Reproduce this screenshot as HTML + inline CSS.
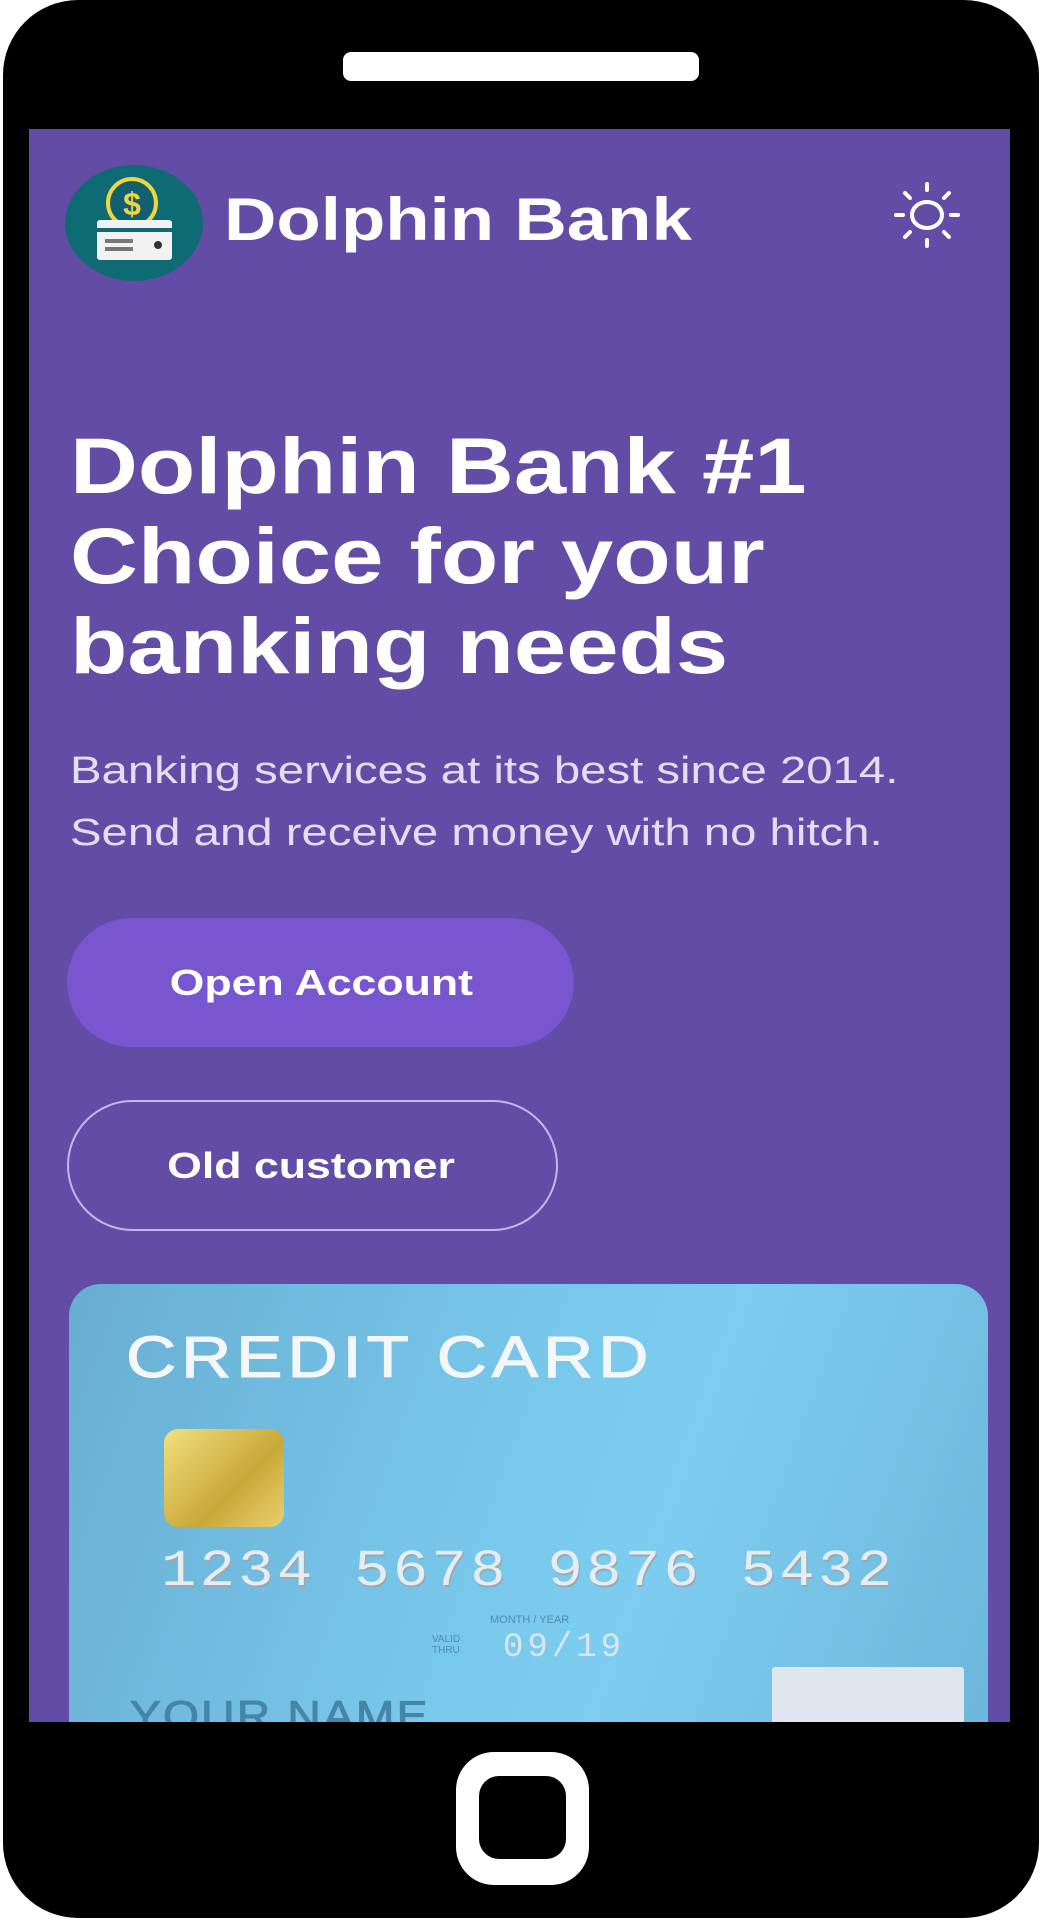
<!DOCTYPE html>
<html><head><meta charset="utf-8"><style>
*{margin:0;padding:0;box-sizing:border-box}
html,body{width:1042px;height:1920px;background:#fff;overflow:hidden;font-family:"Liberation Sans",Arial,sans-serif}
.phone{position:absolute;left:3px;top:0;width:1036px;height:1918px;background:#000;border-radius:75px}
.spk{position:absolute;left:343px;top:52px;width:356px;height:29px;background:#fff;border-radius:8px}
.screen{position:absolute;left:29px;top:129px;width:981px;height:1593px;background:#624ca6;overflow:hidden}
.home{position:absolute;left:456px;top:1752px;width:133px;height:133px;background:#fff;border-radius:38px}
.home:after{content:"";position:absolute;left:23px;top:24px;width:87px;height:83px;background:#000;border-radius:20px}
.abs{position:absolute}
.brand{left:195px;top:56px;font-size:60px;font-weight:bold;color:#fff;white-space:nowrap;transform:scaleX(1.21);transform-origin:left}
h1{position:absolute;left:41px;top:292px;font-size:79px;line-height:90px;color:#fff;font-weight:bold;white-space:nowrap;transform:scaleX(1.19);transform-origin:left}
.p{left:41px;top:611px;font-size:38px;line-height:62px;color:#e4dcf3;white-space:nowrap;transform:scaleX(1.245);transform-origin:left}
.b1{left:38px;top:789px;width:507px;height:129px;border-radius:65px;background:#7856d0;color:#fff;font-weight:bold;font-size:36px;display:flex;align-items:center;justify-content:center;padding-left:2px}
.b2{left:38px;top:971px;width:491px;height:131px;border-radius:66px;border:2px solid #c6b6ee;color:#fff;font-weight:bold;font-size:36px;display:flex;align-items:center;justify-content:center;padding-right:2px}
.b1 span,.b2 span{display:inline-block;transform:scaleX(1.24)}
.card{left:40px;top:1155px;width:919px;height:600px;border-radius:32px;background:linear-gradient(110deg,#68aed2 0%,#78c8ec 45%,#7dcdf0 60%,#6ab4d8 100%)}
</style></head><body>
<div class="phone"></div>
<div class="spk"></div>
<div class="screen">
  <svg class="abs" style="left:36px;top:36px" width="140" height="118" viewBox="0 0 140 118">
    <ellipse cx="69" cy="58" rx="69" ry="58" fill="#0f6b73"/>
    <circle cx="67" cy="38" r="24" fill="#116070" stroke="#f0d540" stroke-width="4"/>
    <text x="67" y="50" text-anchor="middle" font-size="32" font-weight="bold" fill="#f0d540" font-family="Liberation Sans">$</text>
    <rect x="32" y="55" width="75" height="40" rx="3" fill="#f2f2f2"/>
    <rect x="32" y="63" width="75" height="4" fill="#0f6b73"/>
    <rect x="40" y="74" width="28" height="4" fill="#777"/>
    <rect x="40" y="82" width="28" height="4" fill="#777"/>
    <circle cx="93" cy="80" r="4" fill="#333"/>
  </svg>
  <div class="abs brand">Dolphin Bank</div>
  <svg class="abs" style="left:863px;top:50px" width="70" height="70" viewBox="0 0 70 70" stroke="#fff" stroke-width="4" stroke-linecap="round" fill="none">
    <ellipse cx="35" cy="36" rx="15" ry="13"/>
    <path d="M35 5v6M35 61v6M4 36h7M59 36h7M13 14l5 5M57 14l-5 5M13 58l5-5M57 58l-5-5"/>
  </svg>
  <h1>Dolphin Bank #1<br>Choice for your<br>banking needs</h1>
  <div class="abs p">Banking services at its best since 2014.<br>Send and receive money with no hitch.</div>
  <div class="abs b1"><span>Open Account</span></div>
  <div class="abs b2"><span>Old customer</span></div>
  <div class="abs card">
    <div class="abs" style="left:57px;top:40px;font-size:58px;color:#f4f6f8;letter-spacing:4px;white-space:nowrap;transform:scaleX(1.2);transform-origin:left;-webkit-text-stroke:1px #f4f6f8">CREDIT CARD</div>
    <div class="abs" style="left:95px;top:145px;width:120px;height:98px;border-radius:14px;background:linear-gradient(135deg,#f3df80,#c9a838 60%,#e8d070)"></div>
    <div class="abs" style="left:92px;top:258px;font-family:'Liberation Mono',monospace;font-size:52px;color:#e6ecf0;letter-spacing:3px;white-space:nowrap;text-shadow:1px 2px 0 #9aa8b4;transform:scaleX(1.13);transform-origin:left">1234 5678 9876 5432</div>
    <div class="abs" style="left:421px;top:330px;font-size:11px;color:#4d8cb0">MONTH / YEAR</div>
    <div class="abs" style="left:363px;top:350px;font-size:10px;line-height:11px;color:#4d8cb0">VALID<br>THRU</div>
    <div class="abs" style="left:434px;top:345px;font-family:'Liberation Mono',monospace;font-size:34px;color:#dce6ee;white-space:nowrap;letter-spacing:4px">09/19</div>
    <div class="abs" style="left:61px;top:408px;font-size:42px;color:#4586a8;letter-spacing:2px;white-space:nowrap;transform:scaleX(1.1);transform-origin:left;-webkit-text-stroke:1px #4586a8">YOUR NAME</div>
    <div class="abs" style="left:703px;top:383px;width:192px;height:80px;background:#dfe6ee;border-radius:3px"></div>
  </div>
</div>
<div class="home"></div>
</body></html>
